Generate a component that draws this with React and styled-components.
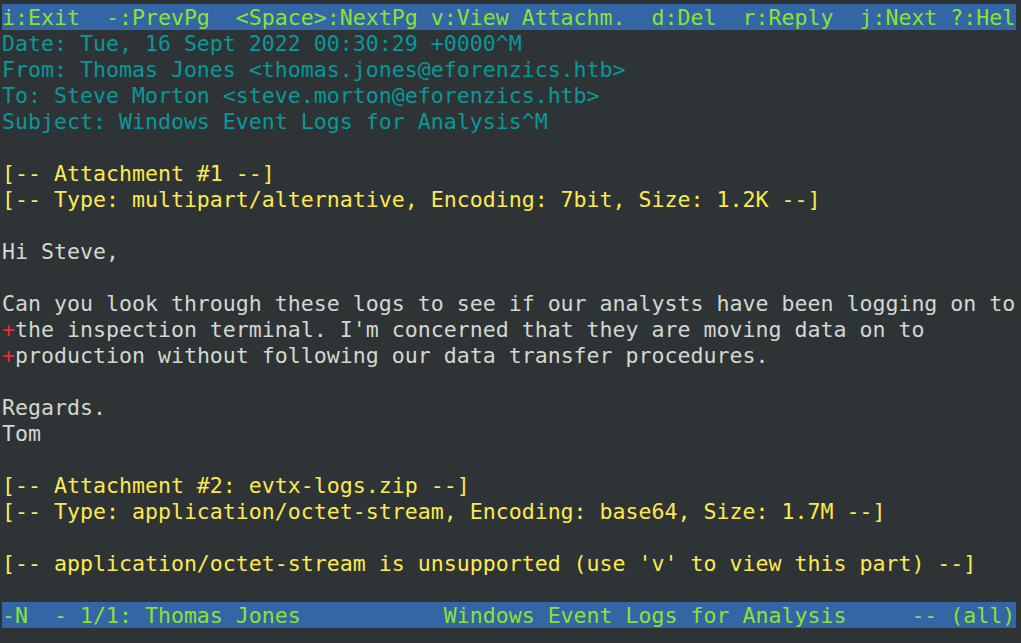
import React from "react";
import styled, { createGlobalStyle } from "styled-components";

const Global = createGlobalStyle`
  html, body {
    margin: 0;
    padding: 0;
    background: #2e3436;
  }
  body {
    width: 1021px;
    height: 643px;
    overflow: hidden;
  }
`;

const palette = {
  cyan: "#06989a",
  yellow: "#fce94f",
  white: "#d3d7cf",
  red: "#ef2929",
  green: "#8ae234",
};

const Terminal = styled.main`
  box-sizing: border-box;
  width: 1021px;
  height: 643px;
  padding: 4px 2px 15px 2px;
  background: #2e3436;
  font-family: "DejaVu Sans Mono", "Liberation Mono", monospace;
  font-size: 21.59px;
  line-height: 26px;
  display: flex;
  flex-direction: column;
`;

const Rows = styled.div`
  display: flex;
  flex-direction: column;
  width: 1014px;
`;

const StatusBar = styled.div`
  box-sizing: border-box;
  height: 26px;
  padding-top: 1px;
  width: 1014px;
  background: #3465a4;
  color: ${palette.green};
  white-space: pre;
  overflow: hidden;
`;

const Line = styled.div`
  box-sizing: border-box;
  height: 26px;
  padding-top: 1px;
  white-space: pre;
  overflow: hidden;
  color: ${(p) => palette[p.$tone] || palette.white};
`;

const Marker = styled.span`
  color: ${palette.red};
`;

const lines = [
  { t: "Date: Tue, 16 Sept 2022 00:30:29 +0000^M", tone: "cyan" },
  { t: "From: Thomas Jones <thomas.jones@eforenzics.htb>", tone: "cyan" },
  { t: "To: Steve Morton <steve.morton@eforenzics.htb>", tone: "cyan" },
  { t: "Subject: Windows Event Logs for Analysis^M", tone: "cyan" },
  { t: "" },
  { t: "[-- Attachment #1 --]", tone: "yellow" },
  { t: "[-- Type: multipart/alternative, Encoding: 7bit, Size: 1.2K --]", tone: "yellow" },
  { t: "" },
  { t: "Hi Steve," },
  { t: "" },
  { t: "Can you look through these logs to see if our analysts have been logging on to" },
  { t: "the inspection terminal. I'm concerned that they are moving data on to", wrap: true },
  { t: "production without following our data transfer procedures.", wrap: true },
  { t: "" },
  { t: "Regards." },
  { t: "Tom" },
  { t: "" },
  { t: "[-- Attachment #2: evtx-logs.zip --]", tone: "yellow" },
  { t: "[-- Type: application/octet-stream, Encoding: base64, Size: 1.7M --]", tone: "yellow" },
  { t: "" },
  { t: "[-- application/octet-stream is unsupported (use 'v' to view this part) --]", tone: "yellow" },
  { t: "" },
];

export default function App() {
  return (
    <>
      <Global />
      <Terminal>
        <StatusBar>
          {"i:Exit  -:PrevPg  <Space>:NextPg v:View Attachm.  d:Del  r:Reply  j:Next ?:Hel"}
        </StatusBar>
        <Rows>
          {lines.map((l, i) => (
            <Line key={i} $tone={l.tone}>
              {l.wrap && <Marker>+</Marker>}
              {l.t}
            </Line>
          ))}
        </Rows>
        <StatusBar>
          {"-N  - 1/1: Thomas Jones           Windows Event Logs for Analysis     -- (all)"}
        </StatusBar>
      </Terminal>
    </>
  );
}
